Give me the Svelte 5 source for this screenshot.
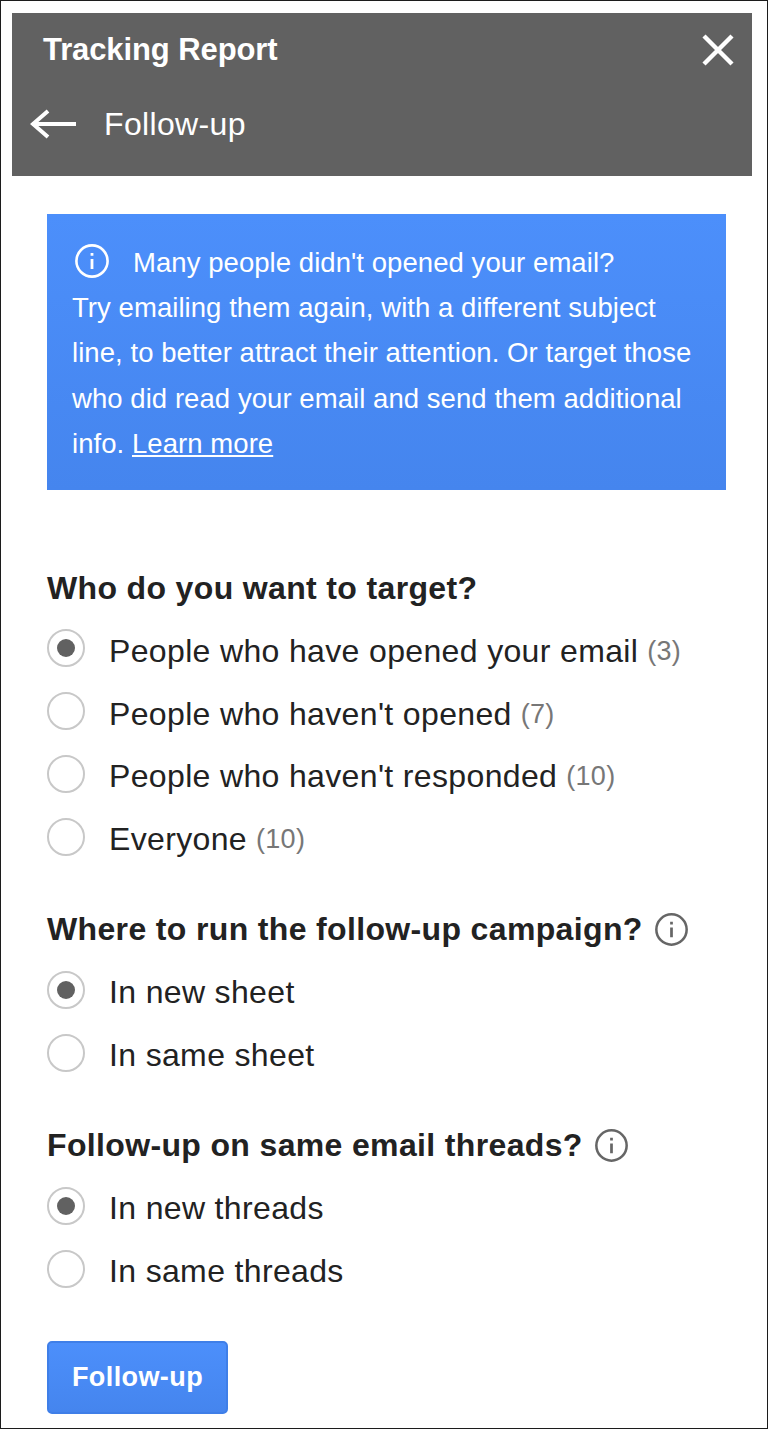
<script>
  const groups = [
    {
      title: 'Who do you want to target?',
      options: [
        { label: 'People who have opened your email', count: 3, checked: true },
        { label: "People who haven't opened", count: 7 },
        { label: "People who haven't responded", count: 10 },
        { label: 'Everyone', count: 10 }
      ]
    },
    {
      title: 'Where to run the follow-up campaign?',
      info: true,
      options: [{ label: 'In new sheet', checked: true }, { label: 'In same sheet' }]
    },
    {
      title: 'Follow-up on same email threads?',
      info: true,
      options: [{ label: 'In new threads', checked: true }, { label: 'In same threads' }]
    }
  ]
</script>

<div class="page">
  <header class="header">
    <div class="title-row">
      <span class="title">Tracking Report</span>
      <svg class="close" viewBox="0 0 32 32" width="32" height="32" aria-hidden="true">
        <path d="M2 2 L30 30 M30 2 L2 30" fill="none" stroke="#fff" stroke-width="4.4" />
      </svg>
    </div>
    <div class="sub-row">
      <svg class="back" viewBox="0 0 46 30" width="46" height="30" aria-hidden="true">
        <path d="M46 15 H4 M18 2 L3 15 L18 28" fill="none" stroke="#fff" stroke-width="4" />
      </svg>
      <span class="subtitle">Follow-up</span>
    </div>
  </header>

  <main class="content">
    <section class="banner">
      <div class="banner-first">
        <svg class="info" viewBox="0 0 36 36" width="36" height="36" aria-hidden="true">
          <circle cx="18" cy="18" r="15.6" fill="none" stroke="#fff" stroke-width="2.6" />
          <path d="M18 16 V26 M18 10 V12.8" fill="none" stroke="#fff" stroke-width="2.8" />
        </svg>
        <span>Many people didn't opened your email?</span>
      </div>
      <p>
        Try emailing them again, with a different subject line, to better attract their attention. Or target those who did read your email and send them additional info. <a href="#learn">Learn more</a>
      </p>
    </section>

    {#each groups as group}
      <section class="group">
        <h2>
          {group.title}
          {#if group.info}
            <svg class="info-dark" viewBox="0 0 36 36" width="35" height="35" aria-hidden="true">
              <circle cx="18" cy="18" r="15.6" fill="none" stroke="#666" stroke-width="2.6" />
              <path d="M18 16 V26 M18 10 V12.8" fill="none" stroke="#666" stroke-width="2.8" />
            </svg>
          {/if}
        </h2>
        {#each group.options as option}
          <div class="option">
            <span class="radio" class:checked={option.checked}></span>
            <span class="label">{option.label}</span>
            {#if option.count}<span class="count">({option.count})</span>{/if}
          </div>
        {/each}
      </section>
    {/each}

    <button class="submit">Follow-up</button>
  </main>
</div>

<style>
  :global(body) {
    margin: 0;
    background: #fff;
  }

  .page {
    box-sizing: border-box;
    width: 768px;
    height: 1429px;
    padding: 12px 15px 0 11px;
    border: 1px solid #1c1c1c;
    overflow: hidden;
    font-family: 'Liberation Sans', Arial, sans-serif;
    color: #222;
  }

  .header {
    box-sizing: border-box;
    height: 163px;
    background: #616161;
    color: #fff;
    padding: 14px 18px 0 31px;
  }

  .title-row {
    display: flex;
    justify-content: space-between;
    align-items: center;
    height: 46px;
  }

  .title {
    font-size: 31px;
    font-weight: 700;
    letter-spacing: -0.1px;
  }

  .sub-row {
    display: flex;
    align-items: center;
    gap: 28px;
    margin: 30px 0 0 -13px;
    height: 42px;
  }

  .subtitle {
    font-size: 32px;
    letter-spacing: 0.35px;
  }

  .content {
    padding: 38px 0 0 35px;
    width: 679px;
  }

  .banner {
    box-sizing: border-box;
    height: 276px;
    padding: 26px 24px 0 25px;
    background: linear-gradient(#4c8ffb, #4585ee);
    color: #fff;
    font-size: 27.5px;
    letter-spacing: 0.06px;
    line-height: 45.25px;
  }

  .banner-first {
    display: flex;
    align-items: center;
    gap: 23px;
    height: 45px;
  }

  .info {
    margin: -4px 0 0 2px;
  }

  .banner p {
    margin: 0;
  }

  .banner a {
    color: #fff;
    text-decoration: underline;
  }

  .group {
    margin-top: 72.5px;
  }

  .group + .group {
    margin-top: 33px;
  }

  h2 {
    display: flex;
    align-items: center;
    gap: 11px;
    margin: 0 0 6.5px;
    height: 51px;
    font-size: 32px;
    letter-spacing: 0.35px;
    font-weight: 700;
  }

  .option {
    display: flex;
    align-items: center;
    height: 62.75px;
    font-size: 32px;
    letter-spacing: 0.35px;
  }

  .radio {
    box-sizing: border-box;
    flex: none;
    width: 38px;
    height: 38px;
    margin: 0 24px 6px 0;
    border: 2px solid #c8c8c8;
    border-radius: 50%;
    display: flex;
    align-items: center;
    justify-content: center;
  }

  .radio.checked::after {
    content: '';
    width: 18px;
    height: 18px;
    border-radius: 50%;
    background: #616161;
  }

  .count {
    margin-left: 9px;
    font-size: 27px;
    letter-spacing: 0.3px;
    color: #777;
  }

  .submit {
    display: block;
    box-sizing: border-box;
    width: 181px;
    height: 73px;
    margin-top: 38px;
    border: 2px solid #3f7fe8;
    border-radius: 5px;
    background: linear-gradient(#4c8ffb, #4585ee);
    color: #fff;
    font: 700 27px 'Liberation Sans', Arial, sans-serif;
    letter-spacing: 0.4px;
  }
</style>
